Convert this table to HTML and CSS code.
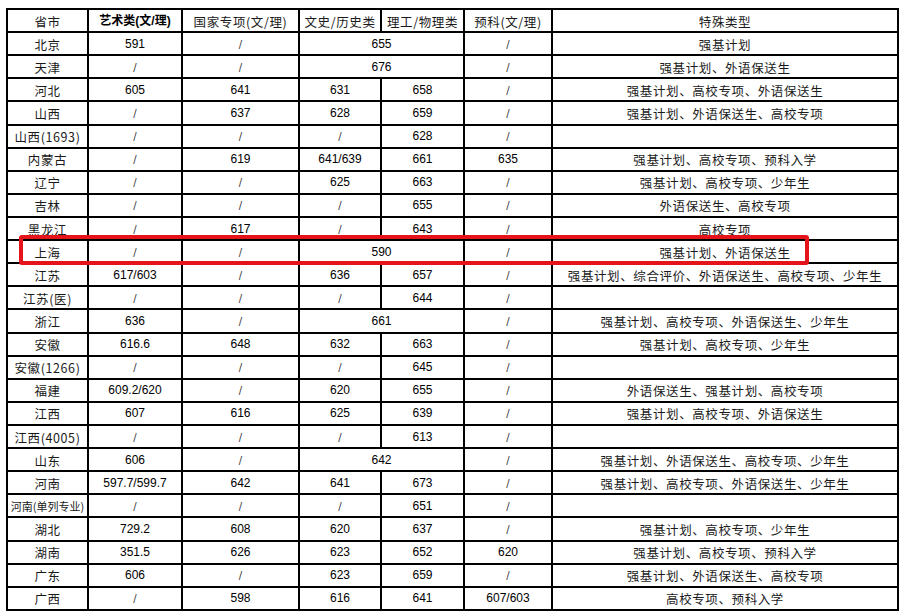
FILE: index.html
```html
<!DOCTYPE html>
<html lang="zh">
<head>
<meta charset="utf-8">
<title>分数线</title>
<link rel="stylesheet" href="styles.css">
</head>
<body>
<div class="sheet">
<table class="grid">
<colgroup>
<col class="c1"><col class="c2"><col class="c3"><col class="c4"><col class="c5"><col class="c6"><col class="c7">
</colgroup>
<thead>
<tr><th class="zh">省市</th><th class="zh b">艺术类(文/理)</th><th class="zh">国家专项(文/理)</th><th class="zh">文史/历史类</th><th class="zh">理工/物理类</th><th class="zh">预科(文/理)</th><th class="zh">特殊类型</th></tr>
</thead>
<tbody>
<tr><td class="zh">北京</td><td>591</td><td class="sl">/</td><td colspan="2">655</td><td class="sl">/</td><td class="zh">强基计划</td></tr>
<tr><td class="zh">天津</td><td class="sl">/</td><td class="sl">/</td><td colspan="2">676</td><td class="sl">/</td><td class="zh">强基计划、外语保送生</td></tr>
<tr><td class="zh">河北</td><td>605</td><td>641</td><td>631</td><td>658</td><td class="sl">/</td><td class="zh">强基计划、高校专项、外语保送生</td></tr>
<tr><td class="zh">山西</td><td class="sl">/</td><td>637</td><td>628</td><td>659</td><td class="sl">/</td><td class="zh">强基计划、外语保送生、高校专项</td></tr>
<tr><td class="zh">山西(1693)</td><td class="sl">/</td><td class="sl">/</td><td class="sl">/</td><td>628</td><td class="sl">/</td><td></td></tr>
<tr><td class="zh">内蒙古</td><td class="sl">/</td><td>619</td><td>641/639</td><td>661</td><td>635</td><td class="zh">强基计划、高校专项、预科入学</td></tr>
<tr><td class="zh">辽宁</td><td class="sl">/</td><td class="sl">/</td><td>625</td><td>663</td><td class="sl">/</td><td class="zh">强基计划、高校专项、少年生</td></tr>
<tr><td class="zh">吉林</td><td class="sl">/</td><td class="sl">/</td><td class="sl">/</td><td>655</td><td class="sl">/</td><td class="zh">外语保送生、高校专项</td></tr>
<tr><td class="zh">黑龙江</td><td class="sl">/</td><td>617</td><td class="sl">/</td><td>643</td><td class="sl">/</td><td class="zh">高校专项</td></tr>
<tr><td class="zh">上海</td><td class="sl">/</td><td class="sl">/</td><td colspan="2">590</td><td class="sl">/</td><td class="zh">强基计划、外语保送生</td></tr>
<tr><td class="zh">江苏</td><td>617/603</td><td class="sl">/</td><td>636</td><td>657</td><td class="sl">/</td><td class="zh">强基计划、综合评价、外语保送生、高校专项、少年生</td></tr>
<tr><td class="zh">江苏(医)</td><td class="sl">/</td><td class="sl">/</td><td class="sl">/</td><td>644</td><td class="sl">/</td><td></td></tr>
<tr><td class="zh">浙江</td><td>636</td><td class="sl">/</td><td colspan="2">661</td><td class="sl">/</td><td class="zh">强基计划、高校专项、外语保送生、少年生</td></tr>
<tr><td class="zh">安徽</td><td>616.6</td><td>648</td><td>632</td><td>663</td><td class="sl">/</td><td class="zh">强基计划、高校专项、少年生</td></tr>
<tr><td class="zh">安徽(1266)</td><td class="sl">/</td><td class="sl">/</td><td class="sl">/</td><td>645</td><td class="sl">/</td><td></td></tr>
<tr><td class="zh">福建</td><td>609.2/620</td><td class="sl">/</td><td>620</td><td>655</td><td class="sl">/</td><td class="zh">外语保送生、强基计划、高校专项</td></tr>
<tr><td class="zh">江西</td><td>607</td><td>616</td><td>625</td><td>639</td><td class="sl">/</td><td class="zh">强基计划、高校专项、外语保送生</td></tr>
<tr><td class="zh">江西(4005)</td><td class="sl">/</td><td class="sl">/</td><td class="sl">/</td><td>613</td><td class="sl">/</td><td></td></tr>
<tr><td class="zh">山东</td><td>606</td><td class="sl">/</td><td colspan="2">642</td><td class="sl">/</td><td class="zh">强基计划、外语保送生、高校专项、少年生</td></tr>
<tr><td class="zh">河南</td><td>597.7/599.7</td><td>642</td><td>641</td><td>673</td><td class="sl">/</td><td class="zh">强基计划、高校专项、外语保送生、少年生</td></tr>
<tr><td class="zh small">河南(单列专业)</td><td class="sl">/</td><td class="sl">/</td><td class="sl">/</td><td>651</td><td class="sl">/</td><td></td></tr>
<tr><td class="zh">湖北</td><td>729.2</td><td>608</td><td>620</td><td>637</td><td class="sl">/</td><td class="zh">强基计划、高校专项、少年生</td></tr>
<tr><td class="zh">湖南</td><td>351.5</td><td>626</td><td>623</td><td>652</td><td>620</td><td class="zh">强基计划、高校专项、预科入学</td></tr>
<tr><td class="zh">广东</td><td>606</td><td class="sl">/</td><td>623</td><td>659</td><td class="sl">/</td><td class="zh">强基计划、外语保送生、高校专项</td></tr>
<tr><td class="zh">广西</td><td class="sl">/</td><td>598</td><td>616</td><td>641</td><td>607/603</td><td class="zh">高校专项、预科入学</td></tr>
</tbody>
</table>
<div class="highlight"></div>
</div>
</body>
</html>
```
FILE: styles.css
```css
html, body {
  margin: 0;
  padding: 0;
  background: #ffffff;
}
body {
  padding: 8px 0 0 6px;
}
.sheet {
  position: relative;
  width: 891px;
}
.grid {
  border-collapse: collapse;
  table-layout: fixed;
  width: 891px;
  font-family: "Liberation Sans", "Noto Sans CJK SC", sans-serif;
  font-size: 12px;
  color: #000000;
}
.c1 { width: 81px; }
.c2 { width: 94px; }
.c3 { width: 117px; }
.c4 { width: 82px; }
.c5 { width: 83px; }
.c6 { width: 88px; }
.c7 { width: 346px; }
.grid tr {
  height: 23.12px;
}
.grid th, .grid td {
  border: 2px solid #000000;
  height: 20.12px;
  padding: 1px 0 0;
  text-align: center;
  vertical-align: middle;
  white-space: nowrap;
  overflow: hidden;
  line-height: 19px;
}
.grid th {
  font-weight: normal;
}
.grid .zh {
  font-family: "Noto Sans CJK SC", "Liberation Sans", sans-serif;
  font-size: 12.5px;
  letter-spacing: 0.6px;
  font-weight: 400;
  color: #1a1a1a;
}
.grid th.b {
  font-family: "Liberation Sans", "Noto Sans CJK SC", sans-serif;
  font-weight: bold;
  letter-spacing: 0;
  font-size: 12px;
  color: #000;
}
.grid .small {
  font-size: 11px;
  letter-spacing: 0;
}
.grid .sl {
  font-family: "DejaVu Sans", sans-serif;
  font-size: 10px;
  color: #333;
}
.highlight {
  position: absolute;
  left: 13px;
  top: 227px;
  width: 782px;
  height: 22px;
  border: 4px solid #e5141b;
  border-radius: 3px;
}
```
